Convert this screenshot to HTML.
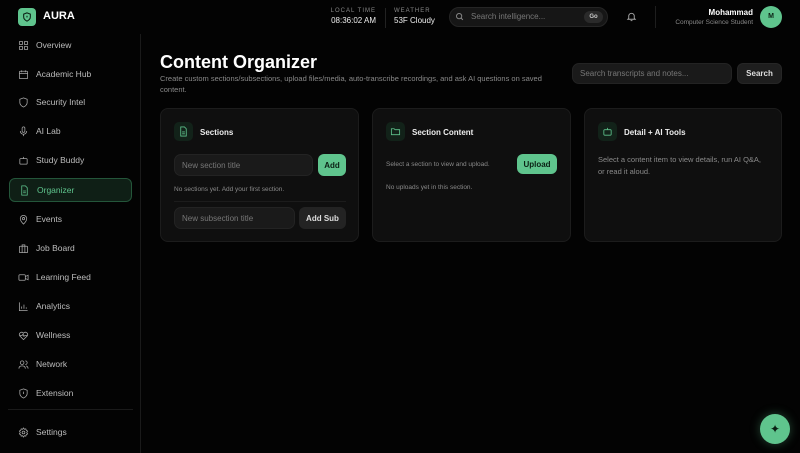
<!DOCTYPE html>
<html><head><meta charset="utf-8"><style>
*{box-sizing:border-box;margin:0;padding:0}
body{width:800px;height:453px;background:#030303;font-family:"Liberation Sans",sans-serif;color:#e8e8e8;position:relative;overflow:hidden}
.abs{position:absolute}
.side{left:0;top:34px;width:141px;height:419px;border-right:1px solid #1a1a1a}
.nav{position:absolute;left:9px;width:123px;height:24px;display:flex;align-items:center;font-size:8.5px;color:#bdbdbd}
.nav svg{margin-left:9px;margin-right:7px;width:11px;height:11px;stroke:#a8a8a8;fill:none;stroke-width:1.7}
.nav.act{background:#0f1f16;border:1px solid #24563a;border-radius:6px;color:#5fc48d}
.nav.act svg{stroke:#5fc48d}
.card{position:absolute;top:108px;height:134px;background:#0f0f0f;border:1px solid #1c1c1c;border-radius:8px}
.ic{position:absolute;left:13px;top:13px;width:19px;height:19px;background:#122219;border-radius:5px;display:flex;align-items:center;justify-content:center}
.ic svg{width:11px;height:11px;stroke:#5fc48d;fill:none;stroke-width:1.8}
.ct{position:absolute;left:39px;top:19px;font-size:8px;font-weight:bold;color:#eee}
.inp{position:absolute;background:#1a1a1a;border:1px solid #232323;border-radius:7px;font-size:8px;color:#777;display:flex;align-items:center;padding-left:7px}
.btn{position:absolute;border-radius:6px;font-size:8px;font-weight:bold;display:flex;align-items:center;justify-content:center}
.g{background:#5fc48d;color:#0b2014}
.d{background:#232323;color:#ddd}
.sm{position:absolute;font-size:6.5px;color:#8a8a8a}
</style></head><body>
<div class="abs" style="left:18px;top:8px;width:18px;height:18px;background:#5fc48d;border-radius:4px;display:flex;align-items:center;justify-content:center"><svg width="10" height="10" viewBox="0 0 24 24" fill="none" stroke="#0b2014" stroke-width="2.5"><path d="M12 2l8 3v7c0 5-4 8-8 10-4-2-8-5-8-10V5z"/><path d="M12 9v4"/></svg></div>
<div class="abs" style="left:43px;top:10px;font-size:11px;font-weight:bold;color:#fff">AURA</div>
<div class="abs" style="left:310px;top:8px;width:66px;text-align:right;font-size:6px;letter-spacing:1px;color:#888">LOCAL TIME</div>
<div class="abs" style="left:300px;top:16px;width:76px;text-align:right;font-size:8px;color:#eee">08:36:02 AM</div>
<div class="abs" style="left:385px;top:8px;width:1px;height:20px;background:#222"></div>
<div class="abs" style="left:394px;top:8px;font-size:6px;letter-spacing:1px;color:#888">WEATHER</div>
<div class="abs" style="left:394px;top:16px;font-size:8px;color:#eee">53F Cloudy</div>
<div class="abs" style="left:449px;top:7px;width:159px;height:20px;background:#161616;border:1px solid #252525;border-radius:10px"></div>
<svg class="abs" style="left:455px;top:12px" width="9" height="9" viewBox="0 0 24 24" fill="none" stroke="#888" stroke-width="2.5"><circle cx="11" cy="11" r="7"/><path d="M16 16l5 5"/></svg>
<div class="abs" style="left:471px;top:12px;font-size:8px;color:#777">Search intelligence...</div>
<div class="abs" style="left:584px;top:11px;width:19px;height:12px;background:#2a2a2a;border-radius:6px;font-size:6px;font-weight:bold;color:#ccc;text-align:center;line-height:12px">Go</div>
<svg class="abs" style="left:626px;top:11px" width="11" height="11" viewBox="0 0 24 24" fill="none" stroke="#aaa" stroke-width="2"><path d="M6 16V11a6 6 0 0112 0v5l2 2H4z"/><path d="M10 21h4"/></svg>
<div class="abs" style="left:655px;top:6px;width:1px;height:22px;background:#1e1e1e"></div>
<div class="abs" style="left:660px;top:8px;width:93px;text-align:right;font-size:8px;font-weight:bold;color:#fff">Mohammad</div>
<div class="abs" style="left:640px;top:19px;width:113px;text-align:right;font-size:6.5px;color:#888">Computer Science Student</div>
<div class="abs" style="left:760px;top:6px;width:22px;height:22px;border-radius:50%;background:#5fc48d;color:#0b2014;font-size:7px;font-weight:bold;text-align:center;line-height:22px">M</div>
<div class="abs side"></div>
<div class="nav" style="top:33px"><svg viewBox="0 0 24 24"><rect x="3" y="3" width="7" height="7" rx="1"/><rect x="14" y="3" width="7" height="7" rx="1"/><rect x="3" y="14" width="7" height="7" rx="1"/><rect x="14" y="14" width="7" height="7" rx="1"/></svg>Overview</div>
<div class="nav" style="top:62px"><svg viewBox="0 0 24 24"><rect x="3" y="5" width="18" height="16" rx="2"/><path d="M3 10h18M8 3v4M16 3v4"/></svg>Academic Hub</div>
<div class="nav" style="top:90px"><svg viewBox="0 0 24 24"><path d="M12 2l8 3v7c0 5-4 8-8 10-4-2-8-5-8-10V5z"/></svg>Security Intel</div>
<div class="nav" style="top:119px"><svg viewBox="0 0 24 24"><rect x="9" y="2" width="6" height="12" rx="3"/><path d="M5 11a7 7 0 0014 0M12 18v4"/></svg>AI Lab</div>
<div class="nav" style="top:148px"><svg viewBox="0 0 24 24"><rect x="4" y="8" width="16" height="12" rx="2"/><path d="M12 8V4M9 14h.01M15 14h.01"/></svg>Study Buddy</div>
<div class="nav act" style="top:178px"><svg viewBox="0 0 24 24"><path d="M14 2H6v20h12V6z"/><path d="M9 13h6M9 17h6"/></svg>Organizer</div>
<div class="nav" style="top:207px"><svg viewBox="0 0 24 24"><path d="M12 22s7-7 7-12a7 7 0 00-14 0c0 5 7 12 7 12z"/><circle cx="12" cy="10" r="2.5"/></svg>Events</div>
<div class="nav" style="top:236px"><svg viewBox="0 0 24 24"><rect x="3" y="7" width="18" height="14" rx="2"/><path d="M9 7V4h6v3M9 7v14M15 7v14"/></svg>Job Board</div>
<div class="nav" style="top:265px"><svg viewBox="0 0 24 24"><rect x="2" y="6" width="14" height="12" rx="2"/><path d="M16 10l6-3v10l-6-3"/></svg>Learning Feed</div>
<div class="nav" style="top:294px"><svg viewBox="0 0 24 24"><path d="M3 3v18h18M8 17v-5M13 17V8M18 17v-3"/></svg>Analytics</div>
<div class="nav" style="top:323px"><svg viewBox="0 0 24 24"><path d="M12 21l-8-8a5 5 0 017-7l1 1 1-1a5 5 0 017 7z"/><path d="M4 12h5l2-3 2 5 2-2h5"/></svg>Wellness</div>
<div class="nav" style="top:352px"><svg viewBox="0 0 24 24"><circle cx="9" cy="8" r="4"/><path d="M2 21c0-4 3-6 7-6s7 2 7 6M16 4a4 4 0 010 8M22 21c0-3-2-5-4-6"/></svg>Network</div>
<div class="nav" style="top:381px"><svg viewBox="0 0 24 24"><path d="M12 2l8 3v7c0 5-4 8-8 10-4-2-8-5-8-10V5z"/><path d="M12 8v5M12 16h.01"/></svg>Extension</div>
<div class="abs" style="left:8px;top:409px;width:125px;height:1px;background:#1a1a1a"></div>
<div class="nav" style="top:420px"><svg viewBox="0 0 24 24"><circle cx="12" cy="12" r="3"/><path d="M12 2l2 3 3-1 1 3 3 2-2 3 2 3-3 2-1 3-3-1-2 3-2-3-3 1-1-3-3-2 2-3-2-3 3-2 1-3 3 1z"/></svg>Settings</div>

<div class="abs" style="left:160px;top:52px;font-size:18px;font-weight:bold;color:#fff">Content Organizer</div>
<div class="abs" style="left:160px;top:73px;width:400px;font-size:7.5px;line-height:11px;color:#8a8a8a">Create custom sections/subsections, upload files/media, auto-transcribe recordings, and ask AI questions on saved content.</div>
<div class="inp" style="left:572px;top:63px;width:160px;height:21px">Search transcripts and notes...</div>
<div class="btn d" style="left:737px;top:63px;width:45px;height:21px;background:#1e1e1e;border:1px solid #262626">Search</div>

<div class="card" style="left:160px;width:199px">
<div class="ic"><svg viewBox="0 0 24 24"><path d="M14 2H6v20h12V6z"/><path d="M9 13h6M9 17h6"/></svg></div>
<div class="ct">Sections</div>
<div class="inp" style="left:13px;top:45px;width:139px;height:22px">New section title</div>
<div class="btn g" style="left:157px;top:45px;width:28px;height:22px">Add</div>
<div class="sm" style="left:13px;top:77px">No sections yet. Add your first section.</div>
<div class="abs" style="left:13px;top:92px;width:172px;height:1px;background:#1c1c1c"></div>
<div class="inp" style="left:13px;top:98px;width:121px;height:22px">New subsection title</div>
<div class="btn d" style="left:138px;top:98px;width:47px;height:22px">Add Sub</div>
</div>
<div class="card" style="left:372px;width:199px">
<div class="ic"><svg viewBox="0 0 24 24"><path d="M3 6h6l2 2h10v11H3z"/></svg></div>
<div class="ct">Section Content</div>
<div class="sm" style="left:13px;top:52px">Select a section to view and upload.</div>
<div class="btn g" style="left:144px;top:45px;width:40px;height:20px">Upload</div>
<div class="sm" style="left:13px;top:75px">No uploads yet in this section.</div>
</div>
<div class="card" style="left:584px;width:198px">
<div class="ic"><svg viewBox="0 0 24 24"><rect x="4" y="8" width="16" height="12" rx="2"/><path d="M12 8V4"/></svg></div>
<div class="ct">Detail + AI Tools</div>
<div class="abs" style="left:13px;top:45px;width:170px;font-size:7.5px;line-height:12px;color:#8a8a8a">Select a content item to view details, run AI Q&amp;A, or read it aloud.</div>
</div>
<div class="abs" style="left:760px;top:414px;width:30px;height:30px;border-radius:50%;background:#5fc48d;box-shadow:0 0 10px rgba(95,196,141,.35);color:#0b2014;font-size:12px;text-align:center;line-height:30px">✦</div>
</body></html>
